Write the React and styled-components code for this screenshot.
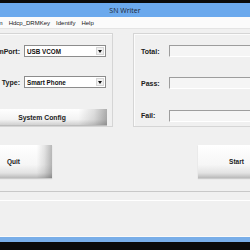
import React from "react";
import styled, { createGlobalStyle } from "styled-components";

const GlobalStyle = createGlobalStyle`
  html, body { margin: 0; padding: 0; width: 250px; height: 250px; overflow: hidden; background: #000; }
  #root { width: 250px; height: 250px; }
`;

const Frame = styled.div`
  width: 250px;
  height: 250px;
  display: flex;
  flex-direction: column;
  overflow: hidden;
  background: #050505;
  font-family: "Liberation Sans", Arial, sans-serif;
`;

const TopStrip = styled.div`
  flex: none;
  height: 3px;
  background: #0a0a0a;
`;

const TitleBar = styled.div`
  flex: none;
  height: 14px;
  background: #6ba9ed;
  display: flex;
  align-items: center;
  justify-content: center;
  font-family: "Open Sans", "Liberation Sans", sans-serif;
  font-size: 7px;
  color: #1d2733;
`;

const MenuBar = styled.div`
  flex: none;
  height: 11px;
  margin-left: -15px;
  background: #fbfbfb;
  border-bottom: 1px solid #e4e4e4;
  display: flex;
  align-items: center;
  gap: 6px;
  font-size: 6px;
  color: #161616;
  white-space: nowrap;
`;

const MenuItem = styled.span``;

const Content = styled.div`
  flex: none;
  height: 208px;
  box-sizing: border-box;
  background: #f0f0f0;
  display: flex;
  flex-direction: column;
  padding-top: 4px;
  overflow: hidden;
`;

const GroupRow = styled.div`
  display: flex;
  height: 94px;
  margin-left: -24px;
  margin-right: -60px;
  gap: 20px;
  flex: none;
`;

const GroupBox = styled.div`
  box-sizing: border-box;
  border: 1px solid #d5d5d5;
  box-shadow: inset 1px 1px 0 #fbfbfb;
  display: grid;
  align-content: start;
  ${(p) => (p.$grow ? "flex: 1;" : `width: ${p.$width}px; flex: none;`)}
`;

const LeftGrid = styled(GroupBox)`
  grid-template-columns: 43px 82px;
  column-gap: 4px;
  grid-template-rows: 12px 12px 16px;
  row-gap: 19px;
  padding: 11px 6px 1px 0;
`;

const RightGrid = styled(GroupBox)`
  grid-template-columns: 28px 1fr;
  grid-template-rows: 12px 12px 12px;
  row-gap: 20px;
  padding: 11px 0 0 7px;
`;

const Label = styled.span`
  font-size: 7px;
  font-weight: bold;
  color: #202020;
  align-self: center;
  white-space: nowrap;
  text-align: ${(p) => (p.$right ? "right" : "left")};
  ${(p) => (p.$shift ? `margin-top: ${p.$shift}px;` : "")}
`;

const Combo = styled.div`
  box-sizing: border-box;
  height: 12px;
  background: #fff;
  border: 1px solid #8c8c8c;
  display: flex;
  align-items: center;
  justify-content: space-between;
  padding-left: 2px;
  font-size: 6.3px;
  font-weight: bold;
  color: #111;
`;

const ComboArrow = styled.span`
  box-sizing: border-box;
  width: 8px;
  height: 8px;
  margin-right: 1px;
  background: #f0f0f0;
  border: 1px solid #d6d6d6;
  display: flex;
  align-items: center;
  justify-content: center;
`;

const ConfigButton = styled.div`
  grid-column: 1 / 3;
  margin-top: 2px;
  margin-right: -1px;
  height: 16px;
  display: flex;
  align-items: center;
  justify-content: center;
  font-size: 6.8px;
  font-weight: bold;
  color: #1a1a1a;
  background:
    linear-gradient(to right, rgba(0,0,0,0) 78%, rgba(0,0,0,0.12) 90%, rgba(0,0,0,0.32) 100%),
    linear-gradient(to bottom, #ffffff 0%, #f3f3f3 65%, #d0d0d0 100%);
  box-shadow: 0 1px 0 #bdbdbd;
`;

const Field = styled.div`
  box-sizing: border-box;
  height: 12px;
  margin-top: ${(p) => p.$shift || 0}px;
  background: #f5f5f5;
  border-top: 1px solid #9d9d9d;
  border-left: 1px solid #9d9d9d;
  border-bottom: 1px solid #ffffff;
`;

const ButtonRow = styled.div`
  flex: none;
  display: flex;
  justify-content: space-between;
  margin: 18px -25px 0 -25px;
  height: 33px;
`;

const BigButton = styled.div`
  width: 77px;
  height: 33px;
  display: flex;
  align-items: center;
  justify-content: center;
  font-size: 6.5px;
  font-weight: bold;
  color: #1a1a1a;
  background:
    linear-gradient(to right, rgba(0,0,0,0) 80%, rgba(0,0,0,0.1) 90%, rgba(0,0,0,0.28) 100%),
    linear-gradient(to bottom, #ffffff 0%, #f6f6f6 60%, #e2e2e2 85%, #b9b9b9 100%);
  box-shadow: 0 1px 1px rgba(0,0,0,0.15);
`;

const Separator = styled.div`
  flex: none;
  height: 1px;
  margin-top: ${(p) => p.$gap}px;
  background: ${(p) => p.$color};
`;

const Filler = styled.div`
  flex: 1;
`;

const BottomEdge = styled.div`
  flex: none;
  height: 1px;
  background: #fafafa;
`;

const BlueFrame = styled.div`
  flex: none;
  height: 5px;
  background: #79aee8;
`;

const BlackBase = styled.div`
  flex: none;
  height: 8px;
  background: #0a0a0a;
`;

const Arrow = () => (
  <svg width="4" height="3" viewBox="0 0 4 3">
    <path d="M0 0 H4 L2 3 Z" fill="#111" />
  </svg>
);

export default function App() {
  return (
    <>
      <GlobalStyle />
      <Frame>
        <TopStrip />
        <TitleBar>SN Writer</TitleBar>
        <MenuBar>
          <MenuItem>Option</MenuItem>
          <MenuItem>Hdcp_DRMKey</MenuItem>
          <MenuItem>Identify</MenuItem>
          <MenuItem>Help</MenuItem>
        </MenuBar>
        <Content>
          <GroupRow>
            <LeftGrid $width={137}>
              <Label $right>ComPort:</Label>
              <Combo>
                USB VCOM
                <ComboArrow><Arrow /></ComboArrow>
              </Combo>
              <Label $right>Type:</Label>
              <Combo>
                Smart Phone
                <ComboArrow><Arrow /></ComboArrow>
              </Combo>
              <ConfigButton>System Config</ConfigButton>
            </LeftGrid>
            <RightGrid $grow>
              <Label>Total:</Label>
              <Field />
              <Label>Pass:</Label>
              <Field />
              <Label $shift={1}>Fail:</Label>
              <Field $shift={1} />
            </RightGrid>
          </GroupRow>
          <ButtonRow>
            <BigButton>Quit</BigButton>
            <BigButton>Start</BigButton>
          </ButtonRow>
          <Separator $gap={13} $color="#c8c8c8" />
          <Separator $gap={8} $color="#ffffff" />
          <Filler />
          <BottomEdge />
        </Content>
        <BlueFrame />
        <BlackBase />
      </Frame>
    </>
  );
}
